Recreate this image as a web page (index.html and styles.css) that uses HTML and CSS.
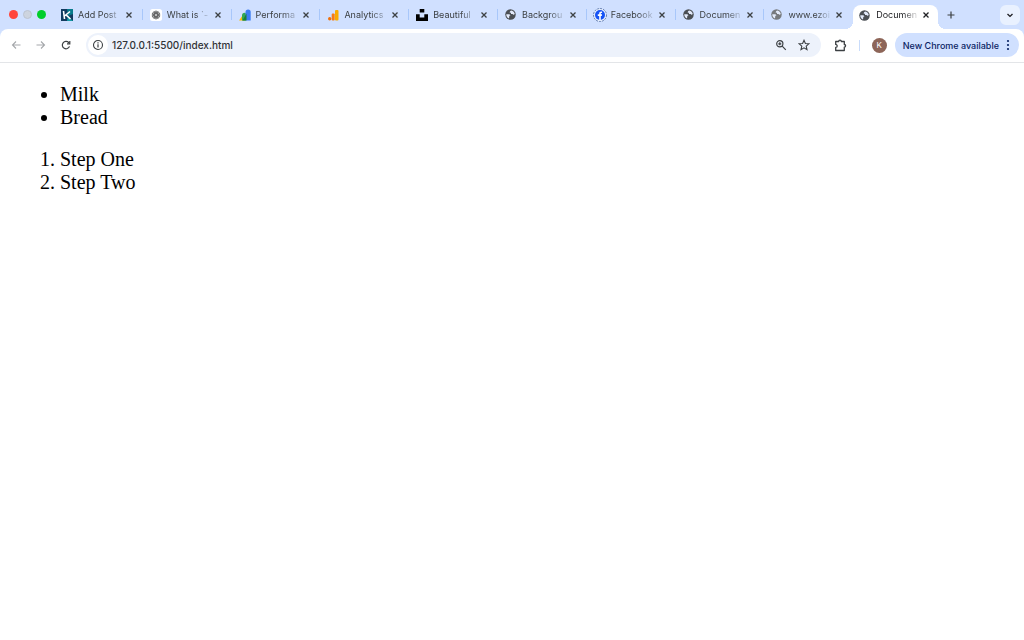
FILE: index.html
```html
<!DOCTYPE html>
<html lang="en">
<head>
<meta charset="utf-8">
<title>Document</title>
<link rel="stylesheet" href="styles.css">
</head>
<body>
<svg class="defs" aria-hidden="true">
  <symbol id="x" viewBox="0 0 8 8"><path d="M1.500 1.500l5 5M6.500 1.500l-5 5" fill="none" stroke="currentColor" stroke-width="1.300"/></symbol>
  <symbol id="globe" viewBox="0 0 22 22"><circle cx="11" cy="11" r="10.500" fill="currentColor"/><path d="M2.500 10.500h5c2 0 3 1 3 3h-2v2.500c0 1-.5 2-1 3-3-1.500-5-4.500-5-8.500zM12 3c3.500.3 6.500 3 7.500 6.500l-1.500 2c-1.500 0-2-1-3-1.500h-3V7.500H9.500C9.500 5 10.500 4 12 3z" fill="#e3eafa"/></symbol>
</svg>
<header class="browser">
  <div class="strip">
    <div class="lights"><span class="light red"></span><span class="light gray"></span><span class="light green"></span></div>
    <nav class="tabs">
      <div class="tab"><svg class="icon" viewBox="0 0 12 12"><rect width="12" height="12" fill="#123b60"/><path d="M6 0h6v5L7 7z" fill="#087b8c"/><path d="M7 7l5 5H6z" fill="#159aa5"/><path d="M2.500 2l1 8M3.500 7l5.500-4.500M5 5.800L9.500 10" stroke="#fff" stroke-width="1.600" fill="none"/></svg><span class="title">Add Post</span><button class="close" aria-label="Close"><svg><use href="#x"/></svg></button></div>
      <div class="tab"><svg class="icon" viewBox="0 0 24 24"><rect width="24" height="24" rx="5" fill="#fff"/><circle cx="12" cy="12" r="8" fill="#bbb"/><g fill="none" stroke="#666" stroke-width="1.500"><rect x="8.500" y="4" width="7" height="12" rx="3.500"/><rect x="8.500" y="4" width="7" height="12" rx="3.500" transform="rotate(60 12 12)"/><rect x="8.500" y="4" width="7" height="12" rx="3.500" transform="rotate(120 12 12)"/><rect x="8.500" y="4" width="7" height="12" rx="3.500" transform="rotate(180 12 12)"/><rect x="8.500" y="4" width="7" height="12" rx="3.500" transform="rotate(240 12 12)"/><rect x="8.500" y="4" width="7" height="12" rx="3.500" transform="rotate(300 12 12)"/></g></svg><span class="title">What is `-</span><button class="close" aria-label="Close"><svg><use href="#x"/></svg></button></div>
      <div class="tab"><svg class="icon" viewBox="0 0 12 12"><path d="M0 11.500l3.500-5L6 11.500z" fill="#fbbc04"/><path d="M3 11.500V6a2.300 2.300 0 0 1 4-1.500v7z" fill="#34a853"/><path d="M6.500 11.500V3a2.600 2.600 0 0 1 5.200 0v8.500z" fill="#3d7df2"/><path d="M3.500 11.500l4-7v7z" fill="#188038"/></svg><span class="title">Performa</span><button class="close" aria-label="Close"><svg><use href="#x"/></svg></button></div>
      <div class="tab"><svg class="icon" viewBox="0 0 12 12"><rect x="8" y="1" width="3.500" height="10.500" rx="1" fill="#f9ab00"/><rect x="4.700" y="4.500" width="3" height="7" rx="1" fill="#f57c16"/><circle cx="2.700" cy="9.800" r="1.700" fill="#f0700a"/></svg><span class="title">Analytics</span><button class="close" aria-label="Close"><svg><use href="#x"/></svg></button></div>
      <div class="tab"><svg class="icon" viewBox="0 0 12 12"><path d="M3.700 0h4.600v3.500H3.700zM0 5.200h3.700v3.300h4.600V5.200H12V12H0z" fill="#000"/></svg><span class="title">Beautiful</span><button class="close" aria-label="Close"><svg><use href="#x"/></svg></button></div>
      <div class="tab"><svg class="icon globe"><use href="#globe"/></svg><span class="title">Backgrou</span><button class="close" aria-label="Close"><svg><use href="#x"/></svg></button></div>
      <div class="tab"><svg class="icon social" viewBox="0 0 14 14"><circle cx="7" cy="7" r="6.500" fill="#e6efff" stroke="#49659c" stroke-width=".8" stroke-dasharray="2 1"/><circle cx="7" cy="7" r="5" fill="#1653f5"/><path d="M6.200 12V8H4.800V6.300h1.400V5.500c0-1.600.8-2.300 2.900-2v1.400c-1-.1-1.300.1-1.300.8v.6h1.300L8.800 8h-1v4z" fill="#fff"/></svg><span class="title">Facebook</span><button class="close" aria-label="Close"><svg><use href="#x"/></svg></button></div>
      <div class="tab"><svg class="icon globe"><use href="#globe"/></svg><span class="title">Documen</span><button class="close" aria-label="Close"><svg><use href="#x"/></svg></button></div>
      <div class="tab"><svg class="icon globe pale"><use href="#globe"/></svg><span class="title">www.ezoi</span><button class="close" aria-label="Close"><svg><use href="#x"/></svg></button></div>
      <div class="tab active"><svg class="icon globe"><use href="#globe"/></svg><span class="title">Documen</span><button class="close" aria-label="Close"><svg><use href="#x"/></svg></button></div>
    </nav>
    <button class="new-tab" aria-label="New tab"><svg class="plus" viewBox="0 0 10 10"><path d="M5 1.500v7M1.500 5h7" stroke="currentColor" stroke-width="1.200"/></svg></button>
    <button class="search-tabs" aria-label="Search tabs"><svg class="chevron" viewBox="0 0 8 8"><path d="M1.500 3L4 5.400 6.500 3" fill="none" stroke="currentColor" stroke-width="1.400"/></svg></button>
  </div>
  <div class="toolbar">
    <div class="history">
      <button class="tool dim" aria-label="Back"><svg viewBox="0 0 12 12"><path d="M10.500 6h-8M6 2.500L2.500 6 6 9.500" fill="none" stroke="currentColor" stroke-width="1.100"/></svg></button>
      <button class="tool dim" aria-label="Forward"><svg viewBox="0 0 12 12"><path d="M1.500 6h8M6 2.500L9.500 6 6 9.500" fill="none" stroke="currentColor" stroke-width="1.100"/></svg></button>
      <button class="tool" aria-label="Reload"><svg viewBox="0 0 12 12"><path d="M9.500 7.400A3.700 3.700 0 1 1 8.700 3.500L9.500 4.400" fill="none" stroke="currentColor" stroke-width="1.200"/><path d="M9.800 2v2.800H7" fill="none" stroke="currentColor" stroke-width="1.200"/></svg></button>
    </div>
    <div class="omnibox">
      <button class="info" aria-label="Site information"><svg viewBox="0 0 12 12"><circle cx="6" cy="6" r="4.500" fill="none" stroke="currentColor" stroke-width="1.100"/><path d="M6 5.300v3.200M6 3.200v1.200" stroke="currentColor" stroke-width="1.200"/></svg></button>
      <input class="url" aria-label="Address" value="127.0.0.1:5500/index.html">
      <button class="tool" aria-label="Zoom"><svg viewBox="0 0 12 12"><circle cx="4.800" cy="4.800" r="3.100" fill="none" stroke="currentColor" stroke-width="1.200"/><path d="M7.200 7.200l3.600 3.600M4.800 3.300v3M3.300 4.800h3" stroke="currentColor" stroke-width="1.200"/></svg></button>
      <button class="tool" aria-label="Bookmark"><svg viewBox="0 0 12 12"><path d="M6 1.300l1.400 3.200 3.400.3-2.600 2.300.8 3.500L6 8.800l-3 1.800.8-3.500L1.200 4.800l3.400-.3z" fill="none" stroke="currentColor" stroke-width="1.100"/></svg></button>
    </div>
    <button class="tool puzzle" aria-label="Extensions"><svg viewBox="0 0 13 13"><path d="M1.700 2.500h3a1.300 1.300 0 0 1 2.600 0h3v3a1.300 1.300 0 0 1 0 2.600v3.400H1.700V8.400a1.500 1.500 0 0 0 0-3z" fill="none" stroke="currentColor" stroke-width="1.300" stroke-linejoin="round"/></svg></button>
    <span class="divider"></span>
    <button class="avatar">K</button>
    <button class="update">New Chrome available<svg class="dots" viewBox="0 0 4 12"><g fill="currentColor"><circle cx="2" cy="2" r="1.100"/><circle cx="2" cy="6" r="1.100"/><circle cx="2" cy="10" r="1.100"/></g></svg></button>
  </div>
</header>
<main class="page">
  <ul class="list"><li>Milk</li><li>Bread</li></ul>
  <ol class="list"><li>Step One</li><li>Step Two</li></ol>
</main>
</body>
</html>
```
FILE: styles.css
```css
* { box-sizing: border-box; }
body { margin: 0; background: #fff; color: #000; }
button { border: 0; padding: 0; margin: 0; background: none; color: inherit; font: inherit; display: flex; align-items: center; justify-content: center; flex: none; }
svg { display: block; flex: none; }
.defs { display: none; }
.browser { background: #d0e0ff; color: #3c4043; font-family: Inter, "Liberation Sans", sans-serif; font-size: 9px; }
.strip { display: flex; align-items: center; height: 29px; padding-right: 4px; }
.lights { display: flex; gap: 5px; width: 53px; padding-left: 9px; flex: none; }
.light { width: 9px; height: 9px; border-radius: 50%; }
.red { background: #ff453c; }
.gray { background: #cdd4df; border: 1px solid #bcc4d1; }
.green { background: #00ce2b; }
.tabs { flex: 1; display: grid; grid-template-columns: repeat(10, minmax(0, 1fr)); align-self: stretch; }
.tab { position: relative; display: flex; align-items: center; padding: 0 9px 0 8px; }
.tab + .tab:not(.active)::before { content: ""; position: absolute; left: 0; top: 9px; width: 1px; height: 11px; background: #a8c7fa; }
.icon { width: 12px; height: 12px; }
.social { width: 14px; height: 14px; margin: 0 -1px; }
.globe { width: 11px; height: 11px; margin-right: 1px; color: #4b4f54; }
.pale { color: #777a7e; }
.title { flex: 1; min-width: 0; margin-left: 5px; overflow: hidden; white-space: nowrap; line-height: 14px; mask-image: linear-gradient(to right, #000 65%, rgba(0, 0, 0, .15)); }
.close { width: 8px; height: 8px; margin-left: 5px; }
.close svg { width: 8px; height: 8px; }
.active { background: #fff; border-radius: 8px 8px 0 0; margin: 5px 3px 0 1px; padding: 0 8px 4px 6px; color: #202124; }
.active::before, .active::after { content: ""; position: absolute; bottom: 0; width: 8px; height: 8px; }
.active::before { left: -8px; background: radial-gradient(circle at 0 0, transparent 8px, #fff 8px); }
.active::after { right: -8px; background: radial-gradient(circle at 100% 0, transparent 8px, #fff 8px); }
.new-tab { width: 20px; height: 20px; }
.plus { width: 10px; height: 10px; }
.search-tabs { width: 20px; height: 20px; margin-left: 39px; border-radius: 6px; background: #e9f1ff; color: #202124; }
.chevron { width: 8px; height: 8px; }
.toolbar { display: flex; align-items: center; height: 34px; padding: 0 5px 1px 9px; background: #fff; border-bottom: 1px solid #e3e5e8; border-radius: 8px 8px 0 0; }
.history { display: flex; gap: 12px; width: 77px; flex: none; }
.tool { width: 13px; height: 13px; }
.tool svg { width: 12px; height: 12px; }
.dim { color: #a5a8ab; }
.omnibox { flex: 1; min-width: 0; display: flex; align-items: center; gap: 10px; height: 24px; padding: 0 10px 0 2px; border-radius: 12px; background: #edf2fb; }
.info { width: 20px; height: 20px; border-radius: 50%; background: #fff; }
.info svg { width: 12px; height: 12px; }
.url { flex: 1; min-width: 0; margin-left: -6px; border: 0; padding: 0; background: none; color: #303236; font: 500 10px/14px Inter, "Liberation Sans", sans-serif; outline: 0; }
.puzzle { margin: 0 12px 0 13px; }
.puzzle svg { width: 13px; height: 13px; }
.divider { width: 1px; height: 11px; background: #c9dcfb; }
.avatar { width: 15px; height: 15px; margin: 0 8px 0 12px; border-radius: 50%; background: #8d6558; color: #fff; font-size: 8px; }
.update { height: 24px; padding: 0 9px 0 8px; gap: 7px; border-radius: 12px; background: #d0e0ff; color: #0b2463; font-weight: 500; }
.dots { width: 4px; height: 12px; }
.page { padding: 20px 10px; font: 20px/23px "Liberation Serif", serif; }
.list { margin: 0 0 19px; padding-left: 50px; }
```
